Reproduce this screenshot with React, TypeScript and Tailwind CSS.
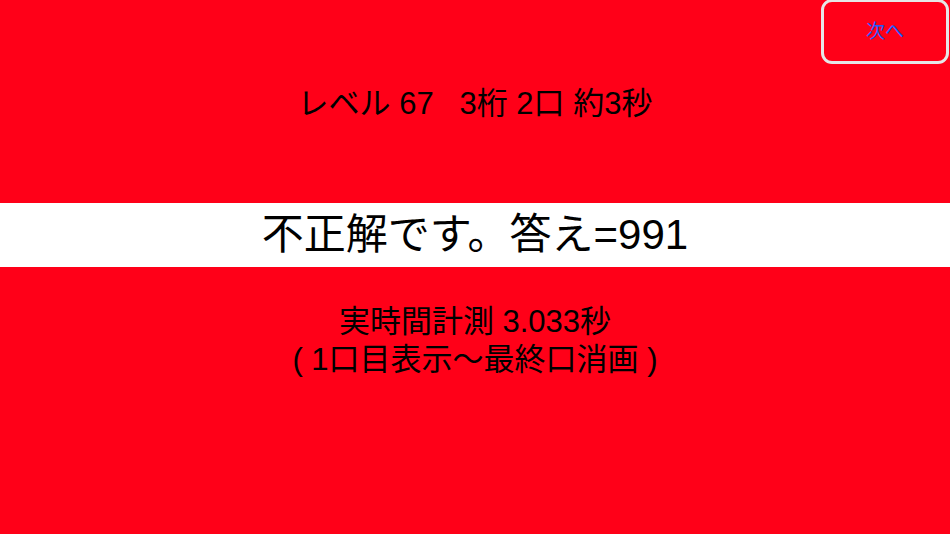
export default function App() {
  const font = { fontFamily: '"Liberation Sans", "Noto Sans CJK JP", sans-serif' };
  return (
    <div
      className="relative w-[950px] h-[534px] bg-[#ff0018] flex flex-col text-black overflow-hidden"
      style={font}
    >
      <div className="h-[203px] flex items-center justify-center pt-[3px]">
        <div className="text-[31px] leading-none whitespace-pre">レベル 67   3桁 2口 約3秒</div>
      </div>
      <div className="h-[64px] bg-white flex items-center justify-center">
        <div className="text-[42px] leading-none whitespace-pre">不正解です。答え=991</div>
      </div>
      <div className="flex flex-col items-center pt-[36px] text-[31px] leading-[38px]">
        <div className="whitespace-pre">実時間計測 3.033秒</div>
        <div className="whitespace-pre">( 1口目表示〜最終口消画 )</div>
      </div>
      <button className="absolute left-[821px] top-[-1px] w-[128px] h-[65px] border-[3px] border-[#e6e6e6] rounded-[11px] bg-transparent flex items-center justify-center">
        <span className="text-[19px] leading-none text-[#1f5cff]">次へ</span>
      </button>
    </div>
  );
}
